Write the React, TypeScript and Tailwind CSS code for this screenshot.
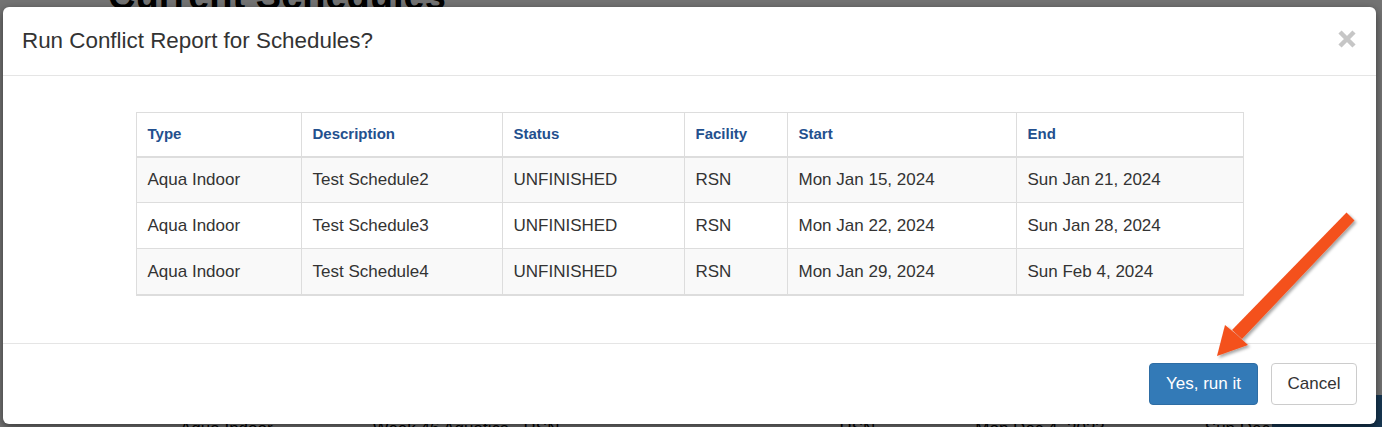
const rows = [
  ["Aqua Indoor", "Test Schedule2", "UNFINISHED", "RSN", "Mon Jan 15, 2024", "Sun Jan 21, 2024"],
  ["Aqua Indoor", "Test Schedule3", "UNFINISHED", "RSN", "Mon Jan 22, 2024", "Sun Jan 28, 2024"],
  ["Aqua Indoor", "Test Schedule4", "UNFINISHED", "RSN", "Mon Jan 29, 2024", "Sun Feb 4, 2024"],
];

const heads = ["Type", "Description", "Status", "Facility", "Start", "End"];
const widths = [165, 201, 182, 103, 229, 227];

function Arrow() {
  return (
    <svg
      className="absolute inset-0 pointer-events-none"
      width="1382"
      height="427"
      viewBox="0 0 1382 427"
    >
      <defs>
        <filter id="arrowShadow" x="-20%" y="-20%" width="140%" height="140%">
          <feDropShadow dx="2" dy="2" stdDeviation="1.6" floodColor="#000" floodOpacity="0.35" />
        </filter>
      </defs>
      <g filter="url(#arrowShadow)" fill="#f4511e">
        <path d="M1346.5 212.5 L1354.5 220.5 L1242 339 L1232 330 Z" />
        <path d="M1217 356 L1225 325 L1236 334 L1248 345 Z" />
      </g>
    </svg>
  );
}

export default function App() {
  return (
    <div className="relative w-[1382px] h-[427px] overflow-hidden bg-white font-['Liberation_Sans',Arial,sans-serif]">
      {/* page behind the dialog */}
      <div className="absolute left-[108px] top-[-32px] text-[38px] font-bold text-black whitespace-nowrap">
        Current Schedules
      </div>
      <div className="absolute left-[180px] top-[416px] flex gap-[100px] text-[17px] text-black whitespace-nowrap">
        <span>Aqua Indoor</span>
        <span>Week 46 Aquatics - RSN</span>
        <span className="ml-[180px]">RSN</span>
        <span>Mon Dec 4, 2023</span>
        <span>Sun Dec 10, 2023</span>
      </div>
      <div className="absolute right-0 top-[395px] w-[110px] h-[40px] bg-[#337ab7]" />

      {/* backdrop */}
      <div className="absolute inset-0 bg-black/55" />

      {/* dialog */}
      <div className="absolute left-[3px] top-[7px] w-[1373px] h-[417px] rounded-[6px] bg-white flex flex-col shadow-[0_3px_9px_rgba(0,0,0,0.5)]">
        <div className="h-[69px] border-b border-[#e5e5e5] flex items-center justify-between pl-[19px] pr-[20px]">
          <h4 className="text-[22.4px] text-[#333] leading-none">Run Conflict Report for Schedules?</h4>
          <button className="w-[18px] h-[18px] mt-[-4px]">
            <svg width="18" height="18" viewBox="0 0 18 18">
              <path d="M2 2 L16 16 M16 2 L2 16" stroke="#c6c6c6" strokeWidth="4.5" />
            </svg>
          </button>
        </div>

        <div className="h-[268px] border-b border-[#e5e5e5] pt-[36px]">
          <table className="mx-auto w-[1107px] table-fixed border-collapse border-b-2 border-[#ddd] text-[#333]">
            <colgroup>
              {widths.map((w, i) => (
                <col key={i} style={{ width: w }} />
              ))}
            </colgroup>
            <thead>
              <tr className="h-[44px]">
                {heads.map((h) => (
                  <th
                    key={h}
                    className="border border-b-2 border-[#ddd] pl-[11px] text-left text-[15px] font-bold text-[#23508e]"
                  >
                    {h}
                  </th>
                ))}
              </tr>
            </thead>
            <tbody>
              {rows.map((r, i) => (
                <tr key={i} className={i % 2 === 0 ? "h-[46px] bg-[#f9f9f9]" : "h-[46px] bg-white"}>
                  {r.map((c, j) => (
                    <td key={j} className="border border-[#ddd] pl-[11px] text-[17px] whitespace-nowrap">
                      {c}
                    </td>
                  ))}
                </tr>
              ))}
            </tbody>
          </table>
        </div>

        <div className="flex justify-end gap-[13px] pt-[19px] pr-[19px]">
          <button className="h-[42px] w-[109px] rounded-[4px] border border-[#2e6da4] bg-[#337ab7] text-[17px] text-white">
            Yes, run it
          </button>
          <button className="h-[42px] w-[86px] rounded-[4px] border border-[#ccc] bg-white text-[17px] text-[#333]">
            Cancel
          </button>
        </div>
      </div>

      <Arrow />
    </div>
  );
}
